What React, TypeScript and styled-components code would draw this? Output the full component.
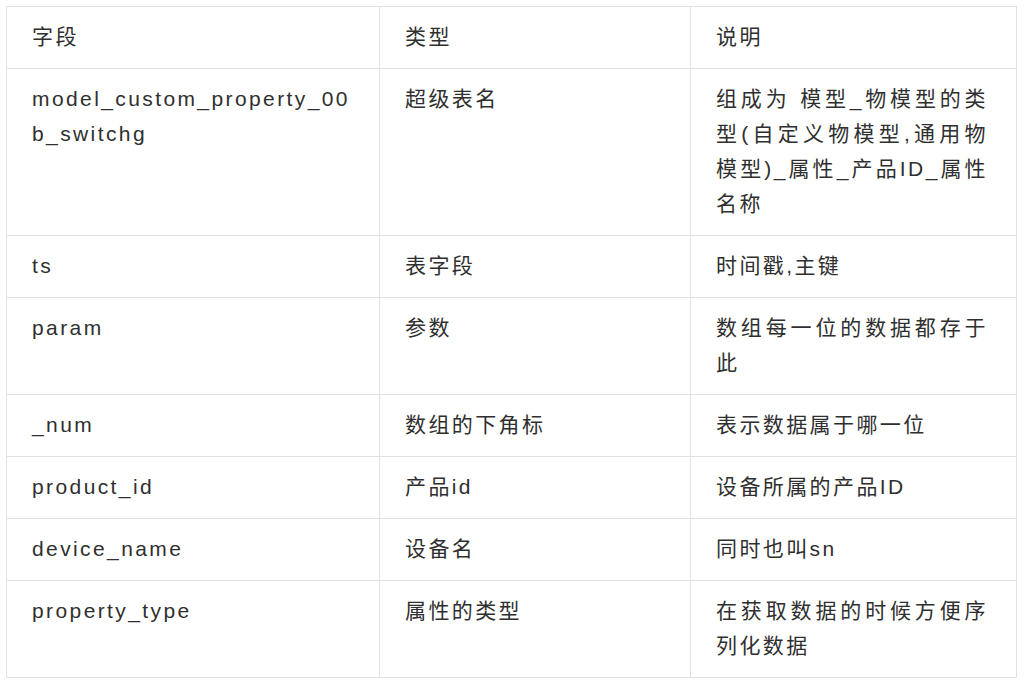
import React from "react";
import styled, { createGlobalStyle } from "styled-components";

interface FieldRow {
  field: string;
  type: string;
  note: string;
}

const rows: FieldRow[] = [
  {
    field: "model_custom_property_00b_switchg",
    type: "超级表名",
    note: "组成为 模型_物模型的类型(自定义物模型,通用物模型)_属性_产品ID_属性名称",
  },
  { field: "ts", type: "表字段", note: "时间戳,主键" },
  { field: "param", type: "参数", note: "数组每一位的数据都存于此" },
  { field: "_num", type: "数组的下角标", note: "表示数据属于哪一位" },
  { field: "product_id", type: "产品id", note: "设备所属的产品ID" },
  { field: "device_name", type: "设备名", note: "同时也叫sn" },
  { field: "property_type", type: "属性的类型", note: "在获取数据的时候方便序列化数据" },
];

const GlobalStyle = createGlobalStyle`
  html, body {
    margin: 0;
    background: #ffffff;
  }
`;

const Page = styled.div`
  padding: 6px 8px 6px 6px;
`;

const Table = styled.table`
  width: 1010px;
  border-collapse: collapse;
  table-layout: fixed;
  border: 1px solid #e2e2e6;
  font-family: "Liberation Sans", "Noto Sans CJK SC", sans-serif;
  font-size: 21px;
  letter-spacing: 2.4px;
  color: #2f2f2f;
`;

const Cell = styled.td<{ $padRight: number }>`
  border: 1px solid #e2e2e6;
  padding: 12px ${(p) => p.$padRight}px 14px 25px;
  line-height: 35px;
  vertical-align: top;
  text-align: justify;
  word-break: break-all;
  font-weight: 400;
`;

const widths = [373, 311, 326];
const padRights = [22, 24, 28];

export default function App() {
  return (
    <Page>
      <GlobalStyle />
      <Table>
        <colgroup>
          {widths.map((w) => (
            <col key={w} style={{ width: w }} />
          ))}
        </colgroup>
        <thead>
          <tr>
            <Cell as="th" $padRight={padRights[0]}>字段</Cell>
            <Cell as="th" $padRight={padRights[1]}>类型</Cell>
            <Cell as="th" $padRight={padRights[2]}>说明</Cell>
          </tr>
        </thead>
        <tbody>
          {rows.map((row) => (
            <tr key={row.field}>
              <Cell $padRight={padRights[0]}>{row.field}</Cell>
              <Cell $padRight={padRights[1]}>{row.type}</Cell>
              <Cell $padRight={padRights[2]}>{row.note}</Cell>
            </tr>
          ))}
        </tbody>
      </Table>
    </Page>
  );
}
